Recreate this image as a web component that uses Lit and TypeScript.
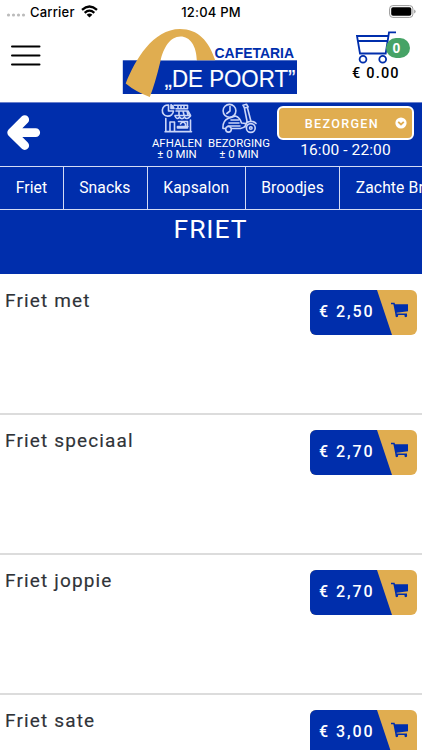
import { LitElement, html, css, svg } from "lit";
import { customElement } from "lit/decorators.js";

const TABS = [
  { label: "Friet", width: 63.5 },
  { label: "Snacks", width: 84 },
  { label: "Kapsalon", width: 98 },
  { label: "Broodjes", width: 94.5 },
  { label: "Zachte Broodjes", width: 150 },
];

const ITEMS = [
  { name: "Friet met", price: "€ 2,50" },
  { name: "Friet speciaal", price: "€ 2,70" },
  { name: "Friet joppie", price: "€ 2,70" },
  { name: "Friet sate", price: "€ 3,00" },
];

@customElement("app-root")
export class AppRoot extends LitElement {
  static styles = css`
    :host { display: block; width: 422px; height: 750px; overflow: hidden; background: #fff; font-family: Roboto, sans-serif; color: #000; }
    * { box-sizing: border-box; }
    svg { display: block; }
    .status { display: grid; grid-template-columns: 1fr auto 1fr; align-items: center; height: 23px; padding: 0 6px 0 6px; font: 500 13px/16px Inter, sans-serif; letter-spacing: 0.2px; }
    .carrier { display: flex; align-items: center; }
    .dots { margin: 6px 4px 0 0; }
    .wifi { margin-left: 6px; }
    .battery { justify-self: end; }
    .header { display: flex; height: 79px; }
    .menu { width: 122px; padding: 22px 0 0 11px; }
    .logo { width: 176px; padding-top: 5px; }
    .cart { position: relative; flex: 1; padding: 8px 0 0 58px; }
    .badge { position: absolute; left: 88px; top: 15px; width: 24px; height: 20px; border-radius: 10px; background: #46a366; color: #fff; font: 700 14px/20px "Liberation Sans", sans-serif; text-align: center; padding-right: 3px; }
    .total { margin: 1px 0 0 -4px; font-weight: 500; font-size: 14.5px; line-height: 17px; letter-spacing: 1.2px; white-space: nowrap; }
    .info { display: flex; height: 64px; background: #002eac; color: #fff; border-top: 1px solid #6a80cc; }
    .back { width: 151px; padding: 12px 0 0 7px; }
    .mode { display: flex; flex-direction: column; align-items: center; font-size: 11.4px; line-height: 11px; text-align: center; white-space: nowrap; }
    .mode svg { margin-bottom: 4px; }
    .pickup { width: 52px; }
    .delivery { width: 72px; }
    .slot { width: 137px; margin-left: 2px; padding-top: 3px; }
    .select { display: flex; align-items: center; justify-content: flex-end; height: 34px; border: 2px solid #fff; border-radius: 6px; background: #e0ad50; padding-right: 5px; font-weight: 500; font-size: 12.6px; letter-spacing: 1.3px; }
    .select svg { margin-left: 16px; }
    .hours { padding-top: 1px; text-align: center; font-size: 15.5px; line-height: 18px; letter-spacing: 0.1px; }
    .tabs { display: flex; height: 44px; background: #002eac; border-top: 1px solid #d4dbf4; border-bottom: 1px solid #d4dbf4; }
    .tab { flex: none; padding-left: 15.7px; border-right: 1px solid #d4dbf4; color: #fff; font-size: 15.7px; line-height: 41px; letter-spacing: 0.1px; white-space: nowrap; }
    .title { height: 64px; padding: 3px 1px 0 0; background: #002eac; color: #fff; text-align: center; font-size: 26.5px; line-height: 32px; letter-spacing: 0.9px; margin: 0; font-weight: 400; }
    .items { padding-top: 1px; }
    .item { display: flex; justify-content: space-between; height: 140px; padding: 15px 5px 0 5px; border-bottom: 2px solid #dcdcdc; }
    .name { font-size: 19px; line-height: 22px; letter-spacing: 1.15px; color: #2f3338; -webkit-text-stroke: 0.15px #2f3338; }
    .buy { display: flex; width: 107px; height: 45px; border-radius: 6px; overflow: hidden; background: #e0ad50; color: #fff; }
    .price { flex: none; width: 82px; padding-left: 9px; background: #002eac; clip-path: polygon(0 0, 67px 0, 82px 100%, 0 100%); font-weight: 500; font-size: 16px; line-height: 44px; letter-spacing: 1.95px; white-space: nowrap; }
    .buy svg { margin: 12px 0 0 -1px; }
  `;

  render() {
    return html`
      <div class="status">
        <div class="carrier">
          <svg class="dots" width="20" height="4" viewBox="0 0 20 4"><g fill="#bbb"><circle cx="2.5" cy="2" r="1.6"/><circle cx="7.5" cy="2" r="1.6"/><circle cx="12.5" cy="2" r="1.6"/><circle cx="17.5" cy="2" r="1.6"/></g></svg>
          Carrier
          <svg class="wifi" width="17" height="13" viewBox="0 0 17 13"><g fill="none" stroke="#000" stroke-width="2.3"><path d="M1 4.800Q8.500-1.800 16 4.800"/><path d="M3.700 7.800Q8.500 3.500 13.300 7.800"/></g><path d="M5.600 9.700Q8.500 7.300 11.400 9.700L8.500 12.600Z"/></svg>
        </div>
        <div>12:04 PM</div>
        <svg class="battery" width="27" height="13" viewBox="0 0 27 13"><rect x=".6" y=".6" width="23.3" height="11.8" rx="3.2" fill="none" stroke="#999"/><rect x="2.2" y="2.2" width="20.1" height="8.6" rx="1.8"/><path d="M25.2 4.5Q26.6 5 26.6 6.5T25.2 8.5Z" fill="#999"/></svg>
      </div>

      <div class="header">
        <div class="menu">
          <svg width="30" height="22" viewBox="0 0 30 22"><path d="M1 1.5H28.5M1 10.5H28.5M1 19.5H28.5" stroke="#000" stroke-width="2" stroke-linecap="round"/></svg>
        </div>
        <div class="logo">
          <svg width="176" height="72" viewBox="122 28 176 72">
            <rect x="122.8" y="60.3" width="174.2" height="33.700" fill="#002eac"/>
            <path d="M161 60.300C165 44 172 36.500 180 36.500C191 36.500 197 46 197 60.300Z" fill="#fff"/>
            <path d="M125.700 83.500C135 60 153 29 180 29C198 29 209 41 215.200 60.300H196.800C196.500 46 190 36.600 180.500 36.600C170 36.600 163.500 48 160.500 61Q155 84 149.800 97Q136 92 125.700 83.500Z" fill="#e0ad50"/>
            <text x="214.500" y="58.200" font-family="Liberation Sans, sans-serif" font-weight="700" font-size="14.400" fill="#002eac" textLength="79.500" lengthAdjust="spacingAndGlyphs">CAFETARIA</text>
            <text x="164.500" y="86.500" font-family="Liberation Sans, sans-serif" font-size="24.300" fill="#fff" stroke="#fff" stroke-width=".15" textLength="131" lengthAdjust="spacingAndGlyphs">„DE POORT”</text>
          </svg>
        </div>
        <div class="cart">
          <svg width="42" height="33" viewBox="356 31 42 33"><g fill="none" stroke="#002eac" stroke-width="1.8"><path d="M396 32.300H389L385.700 53.500H360L357 36H388M358 41H387.500"/><circle cx="363" cy="59.300" r="3.400"/><circle cx="382.700" cy="59.300" r="3.400"/></g></svg>
          <div class="badge">0</div>
          <div class="total">€ 0.00</div>
        </div>
      </div>

      <div class="info">
        <div class="back">
          <svg width="34" height="36" viewBox="0 0 34 36"><path d="M18.300 4.300L4.300 17.600L18.300 31L20 29.300L13.500 21.500V13.500L20 6Z M12 17.600H29" fill="#fff"/><path d="M17.700 4.700L4.700 17.600L17.700 30.500M6 17.600H28.700" fill="none" stroke="#fff" stroke-width="8.800" stroke-linecap="round" stroke-linejoin="round"/></svg>
        </div>
        <div class="mode pickup">
          <svg width="32" height="31" viewBox="0 0 32 31"><g fill="none" stroke="#cbd6f8" stroke-width="1.600" stroke-linejoin="round" stroke-linecap="round">
            <path d="M7.500 2A5.600 5.600 0 1 0 12.500 8H7.500Z"/><path d="M10 1.800Q12.300 3 13 5.500H10Z" fill="#cbd6f8"/>
            <path d="M13 2.200H26.500V5.800H15M17 2.500V5.500M20 2.500V5.500M23 2.500V5.500M15 8H27L29.500 12.500H14M18 8V12M22 8L23 12M26 8L27 12M14 13Q16 17.500 18.500 14Q21 17.500 23.500 14Q26 17.500 29.500 13M4.800 15.500V28.500H29.500V17M4 28.700H30.500M9 28V19H13.500V28M17.500 18.500H26.500V25H16.500V23.500H27M19.500 21Q22 17.500 24.500 21V23"/></g></svg>
          AFHALEN<br>± 0 MIN
        </div>
        <div class="mode delivery">
          <svg width="36" height="31" viewBox="0 0 36 31"><g fill="none" stroke="#cbd6f8" stroke-width="1.600" stroke-linejoin="round" stroke-linecap="round">
            <circle cx="8.500" cy="7.800" r="6.400"/><path d="M9 3.500V8L5.800 10.500"/>
            <path d="M22 2.200L25.500 1.300L27.200 4L23.500 5ZM26.500 5L30 18.500M23.500 5.500L26 18Q25.500 24.500 19.500 25.500H11M4 25.500H2Q1.500 18 7 15.500L14.500 13Q19 14.500 20.500 20L25 20.500M10 17H17.500M8 20H18M7 23H19M24 24Q24 18.500 30.500 18.200Q33.500 18.500 35 20.500"/><circle cx="7.500" cy="26.300" r="2.800"/><circle cx="29.800" cy="25" r="4.400"/><circle cx="29.800" cy="25" r="1.300"/></g></svg>
          BEZORGING<br>± 0 MIN
        </div>
        <div class="slot">
          <div class="select">BEZORGEN
            <svg width="12" height="12" viewBox="0 0 12 12"><circle cx="6" cy="6" r="5.600" fill="#fff"/><path d="M3.200 4.800L6 7.500L8.800 4.800" fill="none" stroke="#e0ad50" stroke-width="1.800"/></svg>
          </div>
          <div class="hours">16:00 - 22:00</div>
        </div>
      </div>

      <nav class="tabs">
        ${TABS.map((t) => html`<div class="tab" style="width:${t.width}px">${t.label}</div>`)}
      </nav>
      <h1 class="title">FRIET</h1>

      <section class="items">
        ${ITEMS.map((i) => html`
          <div class="item">
            <div class="name">${i.name}</div>
            <div class="buy">
              <div class="price">${i.price}</div>
              ${this.cartIcon()}
            </div>
          </div>`)}
      </section>
    `;
  }

  private cartIcon() {
    return html`<svg width="18" height="17" viewBox="0 0 18 17">${svg`<g fill="#002eac"><path d="M0 .8H3.600L4 2.300H17V9.300L5.600 10.800L5.800 11.500H16V13H4.500L2.400 2.300H0Z"/><circle cx="5.800" cy="13.800" r="1.400"/><circle cx="14.800" cy="13.800" r="1.400"/></g>`}</svg>`;
  }
}
